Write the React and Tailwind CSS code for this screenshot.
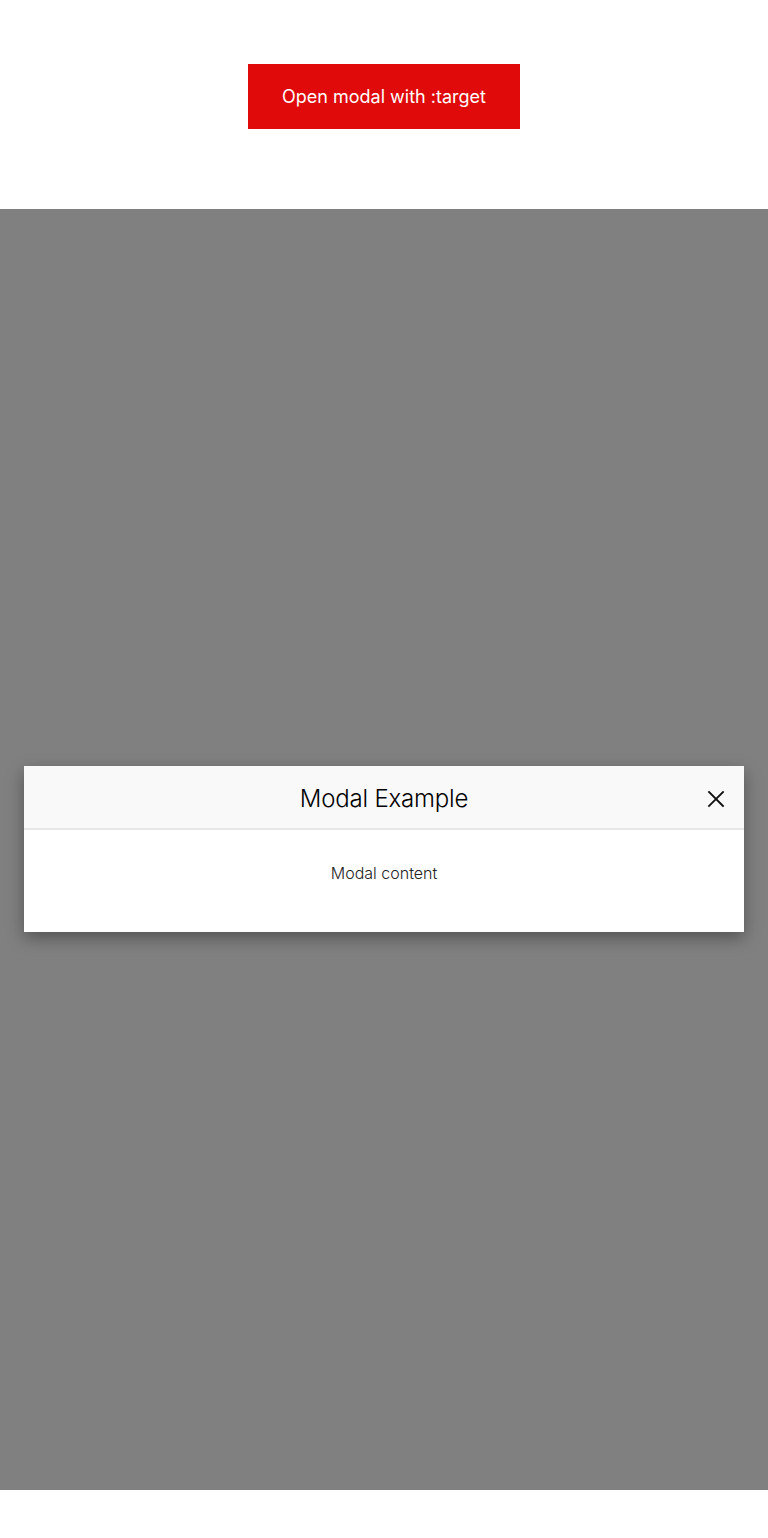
export default function App() {
  return (
    <div className="w-[768px] h-[1538px] bg-white flex flex-col" style={{ fontFamily: "Inter, 'Liberation Sans', sans-serif" }}>
      <div className="h-[209px] flex justify-center pt-16">
        <button className="w-[272px] h-[65px] bg-[#e00a0a] text-white text-[18px] font-normal flex items-center justify-center">
          Open modal with :target
        </button>
      </div>
      <div className="h-[1281px] bg-[#808080] flex items-center justify-center px-6 pb-[2px]">
        <div className="w-[720px] bg-white shadow-[0_6px_16px_rgba(0,0,0,0.35)]">
          <div className="h-[64px] bg-[#f9f9f9] border-b-2 border-[#e8e8e8] flex items-center justify-center relative">
            <h2 className="text-[24px] font-light text-black tracking-[-0.2px] pt-[4px]">Modal Example</h2>
            <button className="absolute right-[19px] top-[24px] w-[18px] h-[18px] flex items-center justify-center">
              <svg width="18" height="18" viewBox="0 0 18 18" fill="none" stroke="#111" strokeWidth="1.8" strokeLinecap="square">
                <path d="M2 2L16 16M16 2L2 16" />
              </svg>
            </button>
          </div>
          <div className="h-[102px] flex justify-center pt-[35px]">
            <p className="text-[16px] font-light text-[#222] leading-none">Modal content</p>
          </div>
        </div>
      </div>
      <div className="flex-1 bg-white" />
    </div>
  );
}
